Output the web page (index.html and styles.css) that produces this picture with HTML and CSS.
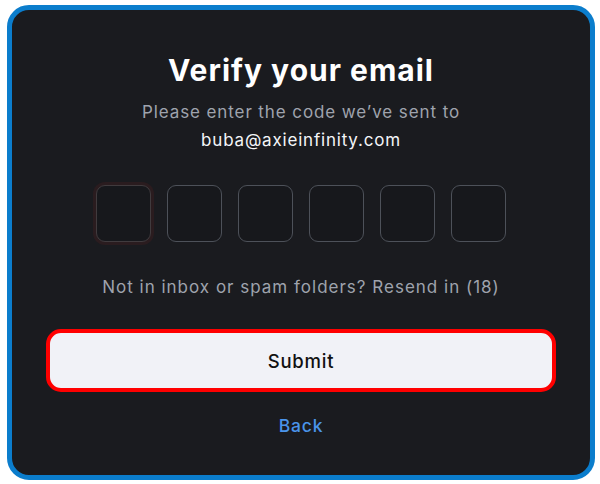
FILE: index.html
```html
<!DOCTYPE html>
<html lang="en">
<head>
  <meta charset="UTF-8">
  <title>Verify your email</title>
  <link rel="stylesheet" href="styles.css">
</head>
<body>
  <div class="card">
    <h1 class="title">Verify your email</h1>
    <p class="subtitle">Please enter the code we’ve sent to</p>
    <p class="email">buba@axieinfinity.com</p>

    <div class="code">
      <input class="digit focused" type="text" maxlength="1">
      <input class="digit" type="text" maxlength="1">
      <input class="digit" type="text" maxlength="1">
      <input class="digit" type="text" maxlength="1">
      <input class="digit" type="text" maxlength="1">
      <input class="digit" type="text" maxlength="1">
    </div>

    <p class="resend">Not in inbox or spam folders? Resend in (18)</p>

    <button class="submit">Submit</button>
    <a class="back" href="#">Back</a>
  </div>
</body>
</html>
```

FILE: styles.css
```css
body {
  margin: 0;
  background: #fff;
  font-family: 'Inter', 'Open Sans', sans-serif;
}

.card {
  margin: 5px 5px 4px 7px;
  height: 475px;
  box-sizing: border-box;
  border: 5px solid #0b7dcc;
  border-radius: 22px;
  background: #1a1b1f;
  display: flex;
  flex-direction: column;
  align-items: center;
  padding-top: 40px;
}

.title {
  margin: 0;
  color: #fff;
  font-size: 30px;
  font-weight: 700;
  letter-spacing: 1px;
  line-height: 40px;
}

.subtitle {
  margin: 10px 0 0;
  color: #9fa3ad;
  font-size: 17px;
  line-height: 24px;
  letter-spacing: 0.9px;
}

.email {
  margin: 4px 0 0;
  color: #f4f5f8;
  font-size: 17px;
  line-height: 24px;
  letter-spacing: 0.8px;
}

.code {
  display: flex;
  gap: 16px;
  margin-top: 33px;
}

.digit {
  width: 55px;
  height: 57px;
  box-sizing: border-box;
  border: 1.5px solid #4d5159;
  border-radius: 9px;
  background: #17181c;
  outline: none;
  color: #fff;
  text-align: center;
  font-size: 22px;
}

.digit.focused {
  border-color: #403b3e;
  box-shadow: 0 0 0 3px rgba(90, 30, 30, 0.25);
}

.resend {
  margin: 33px 0 0;
  color: #9fa3ad;
  font-size: 17px;
  line-height: 24px;
  letter-spacing: 1px;
}

.submit {
  margin-top: 30px;
  width: 510px;
  height: 63px;
  box-sizing: border-box;
  border: 4px solid #ff0000;
  border-radius: 15px;
  background: #f1f2f7;
  color: #111;
  font-family: inherit;
  font-size: 18.5px;
  font-weight: 500;
  letter-spacing: 0.8px;
}

.back {
  margin-top: 23px;
  color: #4a94ea;
  font-size: 17.5px;
  font-weight: 500;
  text-decoration: none;
  letter-spacing: 0.8px;
}
```
